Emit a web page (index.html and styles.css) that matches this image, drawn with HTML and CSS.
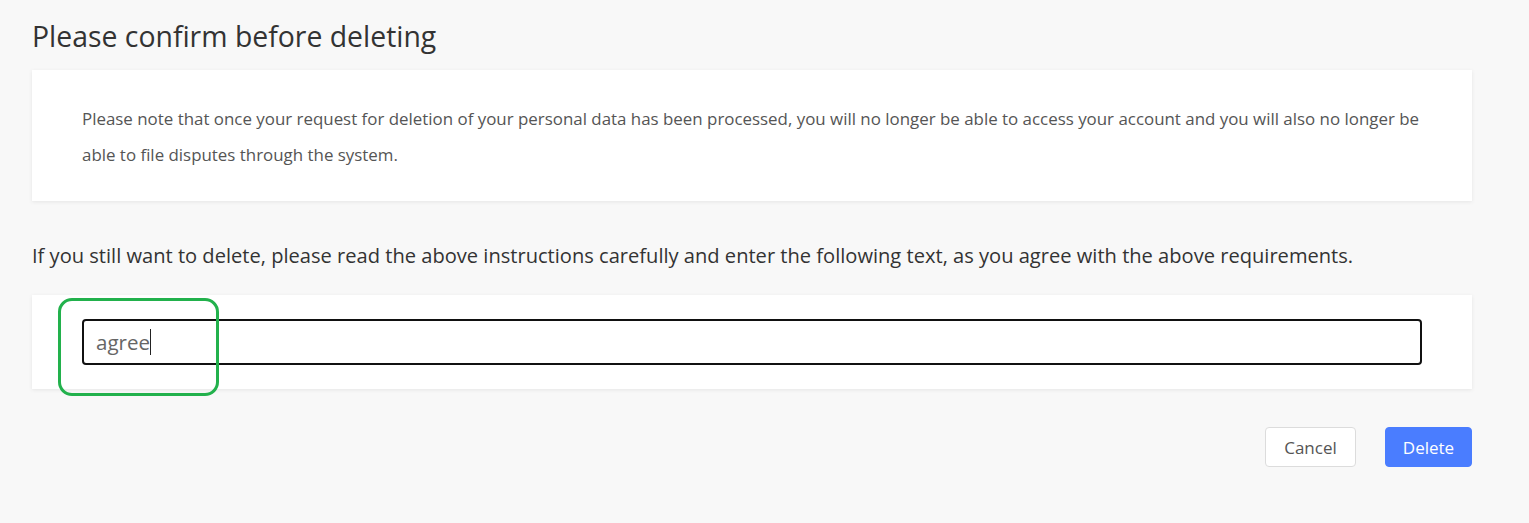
FILE: index.html
```html
<!DOCTYPE html>
<html lang="en">
<head>
    <meta charset="UTF-8">
    <meta name="viewport" content="width=device-width, initial-scale=1.0">
    <title>Delete personal data</title>
    <link rel="stylesheet" href="styles.css">
</head>
<body>

<div class="confirm-page">
    <h2 class="confirm-title">Please confirm before deleting</h2>
    <div class="panel notice">
        <p>Please note that once your request for deletion of your personal data has been processed, you will no longer be able to access your account and you will also no longer be able to file disputes through the system.</p>
    </div>
    <p class="instructions">If you still want to delete, please read the above instructions carefully and enter the following text, as you agree with the above requirements.</p>
    <div class="panel entry">
        <div class="field">
            <span class="typed">agree</span><span class="caret"></span>
        </div>
        <div class="highlight"></div>
    </div>
    <div class="actions">
        <button class="btn btn-cancel">Cancel</button>
        <button class="btn btn-delete">Delete</button>
    </div>
</div>

</body>
</html>
```

FILE: styles.css
```css
body {
    margin: 0;
    background: #f8f8f8;
    font-family: "Open Sans", "Noto Sans", sans-serif;
    color: #333;
}
.confirm-page {
    width: 1440px;
    padding: 16px 0 0 32px;
}
.confirm-title {
    margin: 0 0 14px;
    font-size: 28.4px;
    font-weight: 400;
    line-height: 40px;
    color: #333;
}
.panel {
    background: #fff;
    box-shadow: 0 1px 4px rgba(0, 0, 0, 0.08);
}
.notice {
    padding: 31px 50px 28px;
}
.notice p {
    margin: 0;
    font-size: 16.9px;
    line-height: 36px;
    color: #555;
}
.instructions {
    margin: 41px 0 25px;
    font-size: 20.1px;
    line-height: 28px;
    color: #333;
}
.entry {
    position: relative;
    padding: 24px 50px;
}
.field {
    display: flex;
    align-items: center;
    height: 42px;
    padding: 0 12px;
    border: 2px solid #111;
    border-radius: 4px;
    font-size: 20.5px;
    color: #666;
}
.caret {
    width: 1px;
    height: 26px;
    background: #222;
}
.highlight {
    position: absolute;
    left: 26px;
    top: 3px;
    width: 155px;
    height: 92px;
    border: 3px solid #22b14c;
    border-radius: 14px;
}
.actions {
    display: flex;
    justify-content: flex-end;
    gap: 29px;
    margin-top: 38px;
}
.btn {
    height: 40px;
    border-radius: 4px;
    font-family: inherit;
    font-size: 17px;
}
.btn-cancel {
    width: 91px;
    background: #fff;
    border: 1px solid #dcdcdc;
    color: #555;
}
.btn-delete {
    width: 87px;
    background: #4a7dff;
    border: 1px solid #4a7dff;
    color: #fff;
}
```
